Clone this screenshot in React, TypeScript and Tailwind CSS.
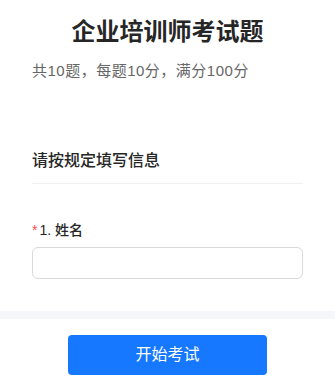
import React from "react";

export default function App() {
  return (
    <div
      className="w-[335px] min-h-[392px] bg-white"
      style={{ fontFamily: '"Liberation Sans", "Noto Sans CJK SC", sans-serif' }}
    >
      <div className="px-8 pt-4">
        <h1 className="text-center text-[24px] leading-8 font-bold text-[#262626]">
          企业培训师考试题
        </h1>
        <p className="mt-3 text-[15px] leading-[22px] tracking-[0.5px] text-[#666666]">
          共10题，每题10分，满分100分
        </p>
        <div className="mt-[67px] border-b border-[#f0f0f0] pb-[10px]">
          <h2 className="text-[16px] leading-6 font-medium text-[#262626]">
            请按规定填写信息
          </h2>
        </div>
        <div className="mt-[35px]">
          <div className="flex items-center text-[14px] leading-[22px] font-medium text-[#262626]">
            <span className="mr-[2px] text-[#ff4d4f]">*</span>
            <span>1. 姓名</span>
          </div>
          <input
            className="mt-[6px] block h-8 w-full rounded-md border border-[#d9d9d9] bg-white px-3 text-[14px] outline-none"
            type="text"
          />
        </div>
      </div>
      <div className="mt-8 h-2 bg-[#f5f6fa]" />
      <div className="flex justify-center pt-4 pb-4">
        <button className="h-10 w-[199px] rounded-[4px] bg-[#1677ff] text-[16px] text-white">
          开始考试
        </button>
      </div>
    </div>
  );
}
